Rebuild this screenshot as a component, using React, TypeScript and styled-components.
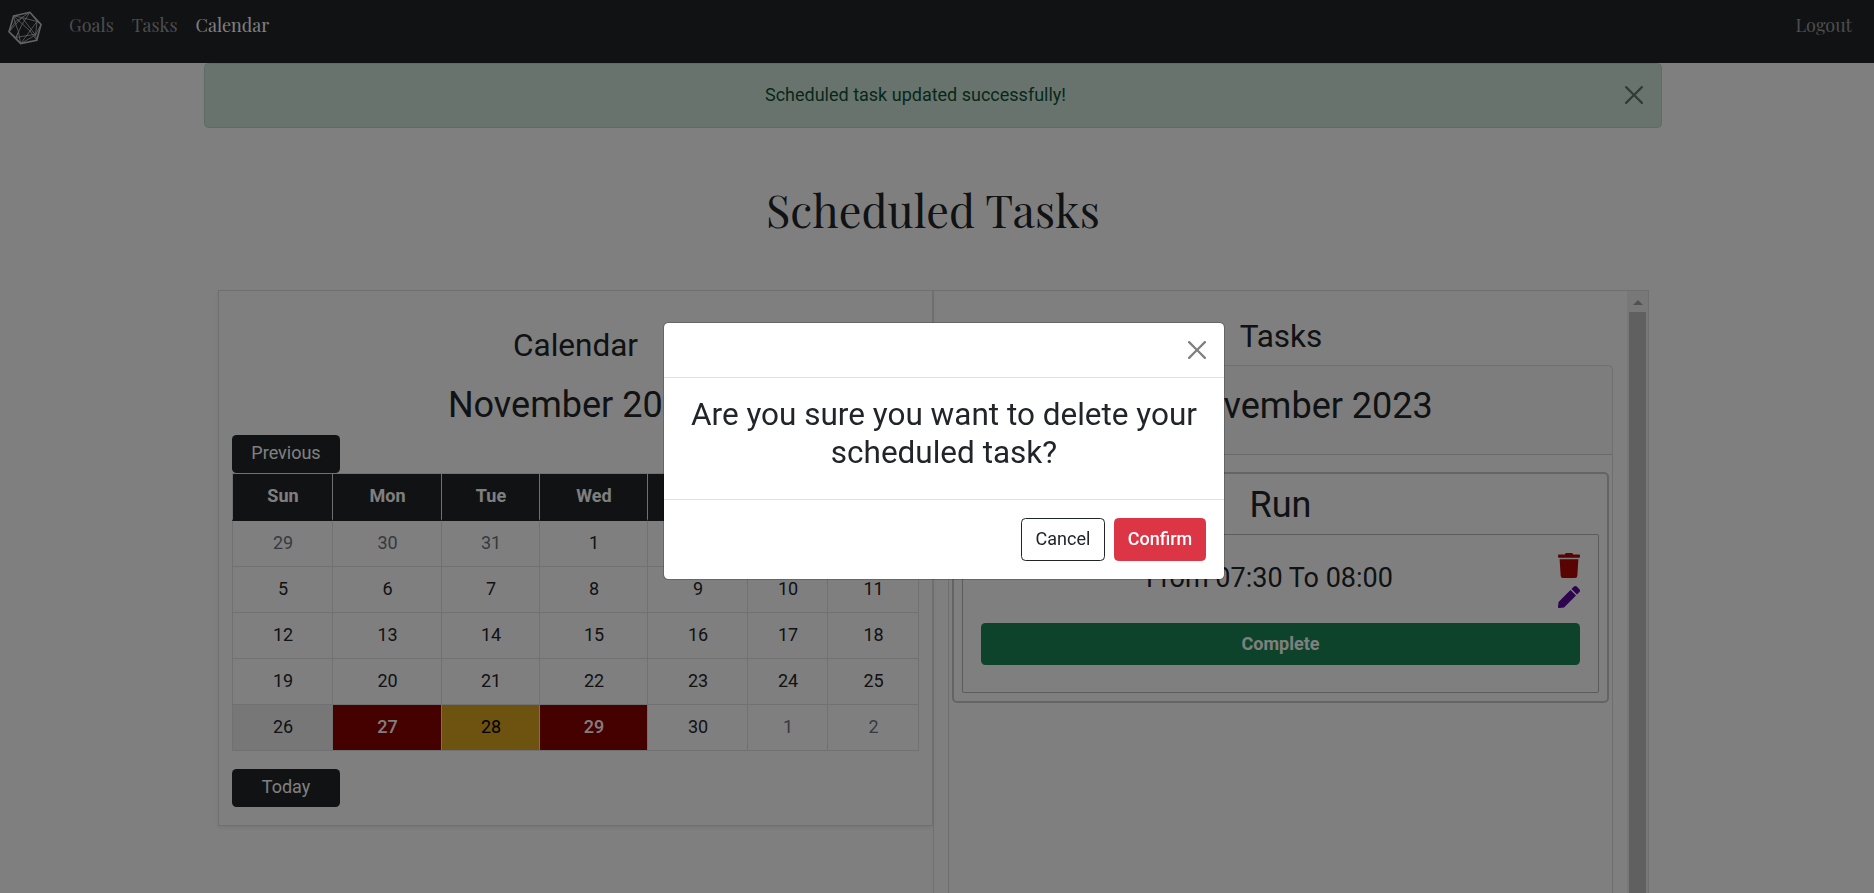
import React from "react";
import styled, { createGlobalStyle, css } from "styled-components";
import { FaPen, FaTrash } from "react-icons/fa";

const GlobalStyle = createGlobalStyle`
  *, *::before, *::after { box-sizing: border-box; }
  html, body { height: 100%; }
  body {
    margin: 0;
    overflow: hidden;
    background: #fff;
    color: #212529;
    font: 400 18px/27px Roboto, "Liberation Sans", sans-serif;
  }
  h1, h2, h3, h4, p { margin: 0; font-weight: 400; }
  button { font: inherit; margin: 0; padding: 0; border: 0; background: none; color: inherit; }
`;

const Page = styled.div`
  height: 893px;
  overflow: hidden;
`;

const Navbar = styled.nav`
  display: flex;
  align-items: flex-start;
  height: 63px;
  padding: 10px 22px 0 8px;
  background: #212529;
  font-family: "Playfair Display", "Liberation Serif", serif;
`;

const Brand = styled.svg`
  display: block;
  width: 34px;
  height: 34px;
  margin: 1px 27px 0 0;
`;

const NavLink = styled.a<{ $active?: boolean }>`
  margin-right: 18px;
  padding-top: 2px;
  font-size: 18px;
  line-height: 26px;
  white-space: nowrap;
  color: ${(p) => (p.$active ? "#fff" : "rgba(255, 255, 255, 0.55)")};
`;

const LogoutLink = styled(NavLink)`
  margin: 0 0 0 auto;
`;

const Container = styled.main`
  width: 1458px;
  margin-left: 204px;
`;

const Alert = styled.div`
  display: flex;
  align-items: center;
  height: 65px;
  padding: 0 18px 0 0;
  border: 1px solid #badbcc;
  border-radius: 4.5px;
  background: #d1e7dd;
  color: #0f5132;
`;

const AlertText = styled.p`
  flex: 1;
  padding: 0 0 2px 1px;
  text-align: center;
`;

const CloseIcon = styled.svg`
  display: block;
  width: 18px;
  height: 18px;
  margin-bottom: 1px;
  opacity: 0.5;
`;

const PageTitle = styled.h1`
  height: 162px;
  padding-top: 54px;
  text-align: center;
  font: 400 45px/54px "Playfair Display", "Liberation Serif", serif;
`;

const Columns = styled.div`
  display: flex;
  align-items: flex-start;
  width: 1431px;
  margin-left: 14px;
`;

const CalendarCard = styled.section`
  width: 715px;
  height: 536px;
  padding: 36px 13px 0;
  border: 1px solid #dfdfdf;
  box-shadow: 0 2px 4px rgba(0, 0, 0, 0.075);
`;

const CardTitle = styled.h3`
  font-size: 31.5px;
  line-height: 38px;
  text-align: center;
`;

const MonthTitle = styled.h2`
  margin: 19px 0 8px;
  font-size: 36px;
  line-height: 43px;
  text-align: center;
`;

const DarkButton = styled.button`
  display: block;
  width: 108px;
  height: 38px;
  padding-bottom: 3px;
  border-radius: 4.5px;
  background: #212529;
  color: #fff;
`;

const Table = styled.div`
  display: grid;
  grid-template-columns: 100px 109px 98px 108px 100px 80px 92px;
  width: 687px;
  margin-bottom: 18px;
  border-top: 1px solid #dee2e6;
`;

const HeadCell = styled.div`
  height: 47px;
  padding-left: 1px;
  border-bottom: 2px solid #212529;
  border-left: 1px solid #dee2e6;
  background: #212529;
  color: #fff;
  font-weight: 700;
  line-height: 43px;
  text-align: center;
  &:nth-child(7) { border-right: 1px solid #dee2e6; }
`;

type Tone = "plain" | "muted" | "hover" | "busy" | "today";

const tones = {
  plain: css``,
  muted: css`color: #6c757d;`,
  hover: css`background: #efefef;`,
  busy: css`background: #8b0000; color: #fff; font-weight: 500;`,
  today: css`background: #daa520; color: #000;`,
};

const DayCell = styled.div<{ $tone: Tone }>`
  height: 46px;
  padding-left: 1px;
  border-bottom: 1px solid #dee2e6;
  border-left: 1px solid #dee2e6;
  line-height: 43px;
  text-align: center;
  &:nth-child(7n) { border-right: 1px solid #dee2e6; }
  ${(p) => tones[p.$tone]}
`;

const TasksPanel = styled.section`
  display: flex;
  width: 716px;
  height: 640px;
  border: 1px solid #dfdfdf;
`;

const TasksBody = styled.div`
  width: 693px;
  padding: 27px 13px 0 14px;
`;

const DayCard = styled.div`
  width: 665px;
  height: 560px;
  margin-top: 9px;
  border: 1px solid #dfdfdf;
  border-radius: 4.5px;
`;

const DayHeader = styled.h2`
  height: 89px;
  padding-top: 19px;
  border-bottom: 1px solid #d2d2d2;
  background: rgba(0, 0, 0, 0.02);
  font-size: 36px;
  line-height: 43px;
  text-align: center;
`;

const TaskCard = styled.div`
  margin: 17px 3px 0 3px;
  height: 231px;
  padding: 9px 8px 0;
  border: 2px solid #c8c8c8;
  border-radius: 5px;
`;

const TaskName = styled.h2`
  margin-bottom: 7px;
  font-size: 36px;
  line-height: 44px;
  text-align: center;
`;

const TaskBox = styled.div`
  height: 159px;
  padding: 18px 18px 0;
  border: 1px solid #b9b9b9;
  border-radius: 2px;
`;

const TaskRow = styled.div`
  display: grid;
  grid-template-columns: 1fr 22px;
  height: 70px;
`;

const TaskTime = styled.h4`
  padding: 9px 0 0 0;
  font-size: 27px;
  line-height: 32px;
  text-align: center;
`;

const TaskActions = styled.div`
  display: flex;
  flex-direction: column;
  align-items: center;
  gap: 8px;
  svg { display: block; width: 22px; }
`;

const CompleteButton = styled.button`
  display: block;
  width: 100%;
  height: 42px;
  padding-bottom: 2px;
  border-radius: 4.5px;
  background: #198754;
  color: #fff;
  font-weight: 700;
`;

const ScrollTrack = styled.div`
  width: 21px;
  padding: 9px 4px 0 2px;
  background: #f1f1f1;
`;

const ScrollArrow = styled.div`
  width: 0;
  height: 0;
  margin: 0 0 7px 4px;
  border: 5px solid transparent;
  border-top: 0;
  border-bottom-color: #a3a3a3;
`;

const ScrollThumb = styled.div`
  width: 17px;
  height: 620px;
  background: #c1c1c1;
`;

const Backdrop = styled.div`
  position: fixed;
  inset: 0;
  background: rgba(0, 0, 0, 0.5);
`;

const Modal = styled.div`
  position: absolute;
  left: 663px;
  top: 322px;
  width: 562px;
  height: 258px;
  border: 1px solid rgba(0, 0, 0, 0.2);
  border-radius: 5.4px;
  background: #fff;
  background-clip: padding-box;
`;

const ModalHeader = styled.div`
  display: flex;
  justify-content: flex-end;
  height: 55px;
  padding: 18px 18px 0 0;
  border-bottom: 1px solid #dee2e6;
`;

const ModalBody = styled.div`
  height: 121px;
  padding: 18px 18px 0;
`;

const ModalFooter = styled.div`
  display: flex;
  justify-content: flex-end;
  gap: 9px;
  padding: 18px 18px 0 0;
  border-top: 1px solid #dee2e6;
`;

const ModalButton = styled.button<{ $danger?: boolean }>`
  width: ${(p) => (p.$danger ? 92 : 84)}px;
  height: 43px;
  padding-bottom: 2px;
  border: 1px solid ${(p) => (p.$danger ? "#dc3545" : "#212529")};
  border-radius: 4.5px;
  background: ${(p) => (p.$danger ? "#dc3545" : "#fff")};
  color: ${(p) => (p.$danger ? "#fff" : "#212529")};
  font-weight: ${(p) => (p.$danger ? 500 : 400)};
`;

const Close = () => (
  <CloseIcon viewBox="0 0 16 16" fill="#000">
    <path d="M.293.293a1 1 0 0 1 1.414 0L8 6.586 14.293.293a1 1 0 1 1 1.414 1.414L9.414 8l6.293 6.293a1 1 0 0 1-1.414 1.414L8 9.414l-6.293 6.293a1 1 0 0 1-1.414-1.414L6.586 8 .293 1.707a1 1 0 0 1 0-1.414z" />
  </CloseIcon>
);

const weekdays = ["Sun", "Mon", "Tue", "Wed", "Thu", "Fri", "Sat"];

const days: { label: number; tone: Tone }[] = Array.from({ length: 35 }, (_, i) => {
  if (i < 3) return { label: 29 + i, tone: "muted" };
  if (i > 32) return { label: i - 32, tone: "muted" };
  const label = i - 2;
  const tone: Tone =
    label === 26 ? "hover" : label === 27 || label === 29 ? "busy" : label === 28 ? "today" : "plain";
  return { label, tone };
});

export default function App() {
  return (
    <>
      <GlobalStyle />
      <Page>
        <Navbar>
          <Brand viewBox="0 0 34 34" fill="none" stroke="#c4c6c8">
            <path d="M5.6 5 21.8 1.3 33 13.4 28.8 29.3 12.6 32.6 1 20.8Z" strokeWidth="1.6" />
            <path
              d="M5.6 5 7 11 1 20.8M5.6 5 14 6.5 21.8 1.3 29 10.5 33 13.4M14 6.5 29 10.5M5.6 5 22 20 28.8 29.3M21.8 1.3 13.5 14.5 8 26.5 1 20.8M7 11 10.5 21 12.6 32.6M7 11 14 6.5M29 10.5 22 20 12.6 32.6M29 10.5 27.5 24 28.8 29.3M8 26.5 28.5 23M8 26.5 12.6 32.6M33 13.4 27.5 24 12.6 32.6M1 20.8 14 6.5M10.5 21 8 26.5M14 6.5 27.5 24"
              strokeWidth="0.8"
            />
          </Brand>
          <NavLink>Goals</NavLink>
          <NavLink>Tasks</NavLink>
          <NavLink $active>Calendar</NavLink>
          <LogoutLink>Logout</LogoutLink>
        </Navbar>
        <Container>
          <Alert>
            <AlertText>Scheduled task updated successfully!</AlertText>
            <Close />
          </Alert>
          <PageTitle>Scheduled Tasks</PageTitle>
          <Columns>
            <CalendarCard>
              <CardTitle>Calendar</CardTitle>
              <MonthTitle>November 2023</MonthTitle>
              <DarkButton>Previous</DarkButton>
              <Table>
                {weekdays.map((d) => (
                  <HeadCell key={d}>{d}</HeadCell>
                ))}
                {days.map((d, i) => (
                  <DayCell key={i} $tone={d.tone}>{d.label}</DayCell>
                ))}
              </Table>
              <DarkButton>Today</DarkButton>
            </CalendarCard>
            <TasksPanel>
              <TasksBody>
                <CardTitle>Tasks</CardTitle>
                <DayCard>
                  <DayHeader>28 November 2023</DayHeader>
                  <TaskCard>
                    <TaskName>Run</TaskName>
                    <TaskBox>
                      <TaskRow>
                        <TaskTime>From 07:30 To 08:00</TaskTime>
                        <TaskActions>
                          <FaTrash color="#b30606" size={25} />
                          <FaPen color="#580a9c" size={22} />
                        </TaskActions>
                      </TaskRow>
                      <CompleteButton>Complete</CompleteButton>
                    </TaskBox>
                  </TaskCard>
                </DayCard>
              </TasksBody>
              <ScrollTrack>
                <ScrollArrow />
                <ScrollThumb />
              </ScrollTrack>
            </TasksPanel>
          </Columns>
        </Container>
      </Page>
      <Backdrop>
        <Modal>
          <ModalHeader>
            <Close />
          </ModalHeader>
          <ModalBody>
            <CardTitle>Are you sure you want to delete your scheduled task?</CardTitle>
          </ModalBody>
          <ModalFooter>
            <ModalButton>Cancel</ModalButton>
            <ModalButton $danger>Confirm</ModalButton>
          </ModalFooter>
        </Modal>
      </Backdrop>
    </>
  );
}
